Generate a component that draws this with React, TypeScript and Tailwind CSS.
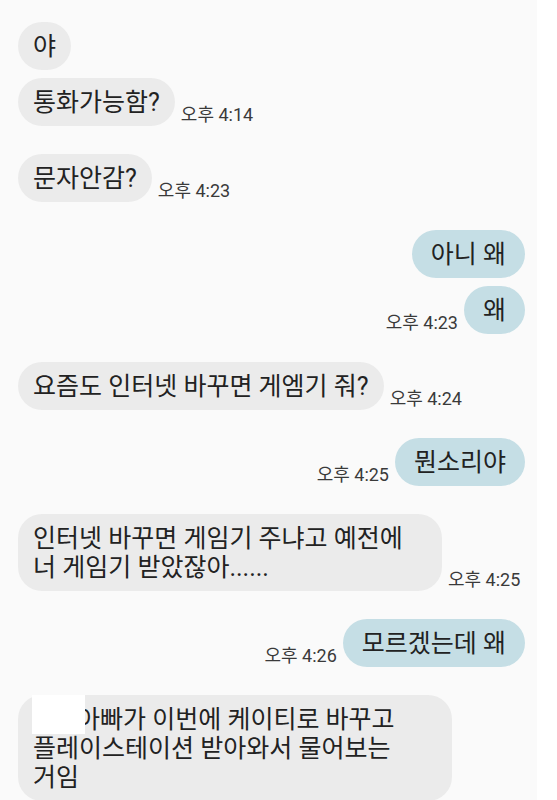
const font = { fontFamily: 'Roboto, "Noto Sans CJK KR", sans-serif' };

function Time({ t }: { t: string }) {
  return (
    <span className="mb-[2px] shrink-0 whitespace-nowrap text-[18px] leading-[18px] text-[#3a3a3a]">
      {t}
    </span>
  );
}

function Left({
  children,
  time,
  className = "",
}: {
  children: React.ReactNode;
  time?: string;
  className?: string;
}) {
  return (
    <div className={`flex items-end gap-[6px] ${className}`}>
      <div className="relative rounded-[24px] bg-[#ebebeb] px-[15px] py-[9.5px] text-[25px] leading-[29px] text-[#222222]">
        {children}
      </div>
      {time && <Time t={time} />}
    </div>
  );
}

function Right({
  children,
  time,
  className = "",
}: {
  children: React.ReactNode;
  time?: string;
  className?: string;
}) {
  return (
    <div className={`flex items-end justify-end gap-[6px] ${className}`}>
      {time && <Time t={time} />}
      <div className="rounded-[24px] bg-[#c5dee5] px-[19px] py-[9.5px] text-[25px] leading-[29px] text-[#222222]">
        {children}
      </div>
    </div>
  );
}

export default function App() {
  return (
    <div className="flex min-h-[800px] w-[557px] overflow-hidden bg-white" style={font}>
      <div className="flex w-[537px] flex-col bg-[#fafafa] pl-[18px] pr-[12px] pt-[22px]">
        <Left>야</Left>
        <Left className="mt-[8px]" time="오후 4:14">
          통화가능함?
        </Left>
        <Left className="mt-[28px]" time="오후 4:23">
          문자안감?
        </Left>

        <Right className="mt-[28px]">아니 왜</Right>
        <Right className="mt-[8px]" time="오후 4:23">
          왜
        </Right>

        <Left className="mt-[28px]" time="오후 4:24">
          요즘도 인터넷 바꾸면 게엠기 줘?
        </Left>

        <Right className="mt-[28px]" time="오후 4:25">
          뭔소리야
        </Right>

        <Left className="mt-[28px]" time="오후 4:25">
          <div className="w-[394px]">
            인터넷 바꾸면 게임기 주냐고 예전에
            <br />
            너 게임기 받았잖아......
          </div>
        </Left>

        <Right className="mt-[28px]" time="오후 4:26">
          모르겠는데 왜
        </Right>

        <Left className="mt-[28px]">
          <div className="w-[404px]">
            <span className="inline-block w-[44px]" />
            아빠가 이번에 케이티로 바꾸고
            <br />
            플레이스테이션 받아와서 물어보는
            <br />
            거임
          </div>
          <div className="absolute left-[14px] top-0 h-[39px] w-[53px] bg-white" />
        </Left>
      </div>
      <div className="flex-1 bg-white" />
    </div>
  );
}
